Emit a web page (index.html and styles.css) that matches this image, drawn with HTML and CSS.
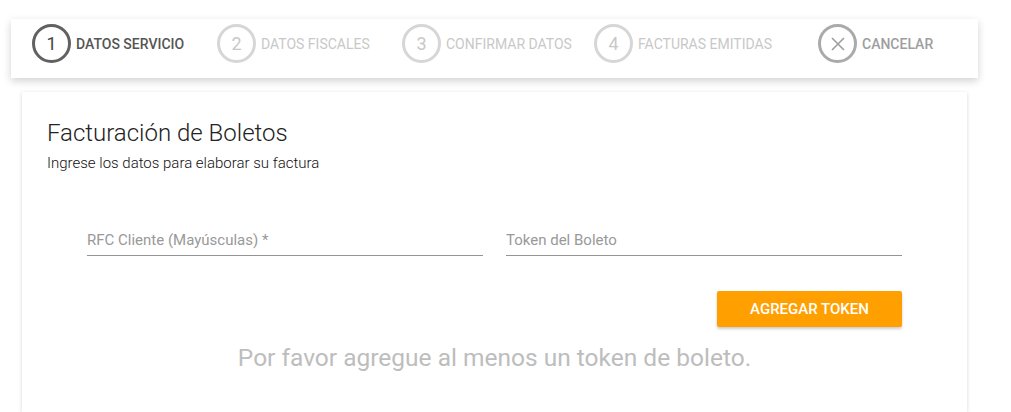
FILE: index.html
```html
<!DOCTYPE html>
<html lang="es">
<head>
  <meta charset="UTF-8">
  <meta name="viewport" content="width=device-width, initial-scale=1.0">
  <title>Facturación de Boletos</title>
  <link rel="stylesheet" href="styles.css">
</head>
<body>
  <div class="stepper">
    <div class="step active"><span class="circle">1</span><span class="step-label">DATOS SERVICIO</span></div>
    <div class="step"><span class="circle">2</span><span class="step-label">DATOS FISCALES</span></div>
    <div class="step"><span class="circle">3</span><span class="step-label">CONFIRMAR DATOS</span></div>
    <div class="step"><span class="circle">4</span><span class="step-label">FACTURAS EMITIDAS</span></div>
    <div class="step cancel">
      <span class="circle">
        <svg width="16" height="16" viewBox="0 0 16 16"><path d="M2 2 L14 14 M14 2 L2 14" stroke="#9e9e9e" stroke-width="1.6" fill="none"/></svg>
      </span>
      <span class="step-label">CANCELAR</span>
    </div>
  </div>

  <div class="card">
    <h1>Facturación de Boletos</h1>
    <p class="subtitle">Ingrese los datos para elaborar su factura</p>

    <div class="fields">
      <label class="field"><span>RFC Cliente (Mayúsculas) *</span></label>
      <label class="field"><span>Token del Boleto</span></label>
    </div>

    <div class="actions">
      <button>AGREGAR TOKEN</button>
    </div>

    <p class="empty">Por favor agregue al menos un token de boleto.</p>
  </div>
</body>
</html>
```

FILE: styles.css
```css
* {
  box-sizing: border-box;
}
body {
  margin: 0;
  padding: 19px 0 0 11px;
  font-family: Roboto, 'Liberation Sans', sans-serif;
  background: #fff;
  width: 1011px;
  height: 412px;
  overflow: hidden;
}

/* barra de pasos */
.stepper {
  width: 967px;
  height: 59px;
  background: #fff;
  box-shadow: 0 3px 8px rgba(0,0,0,0.18);
  display: grid;
  grid-template-columns: 185px 185px 192px 224px auto;
  align-items: start;
  padding: 5px 0 0 21px;
  position: relative;
  z-index: 1;
}
.step {
  display: flex;
  align-items: center;
  color: #c8c8c8;
  font-size: 14px;
}
.circle {
  width: 39px;
  height: 39px;
  border: 3px solid #d6d6d6;
  border-radius: 50%;
  display: flex;
  align-items: center;
  justify-content: center;
  font-size: 18px;
  color: #c8c8c8;
  margin-right: 5px;
}
.step.active {
  color: #555;
  font-weight: 500;
}
.step.active .circle {
  border-color: #616161;
  color: #444;
  font-weight: 400;
}
.step.cancel {
  color: #9e9e9e;
  font-weight: 500;
}
.step.cancel .circle {
  border-color: #aaa;
}

/* tarjeta */
.card {
  width: 945px;
  margin: 14px 0 0 11px;
  height: 320px;
  background: #fff;
  box-shadow: 0 1px 4px rgba(0,0,0,0.16);
  padding: 25px 25px 0;
}
h1 {
  margin: 0;
  font-size: 24px;
  font-weight: 300;
  color: #222;
  line-height: 32px;
}
.subtitle {
  margin: 4px 0 0;
  font-size: 15px;
  font-weight: 300;
  color: #111;
  line-height: 20px;
}
.fields {
  display: grid;
  grid-template-columns: 1fr 1fr;
  gap: 23px;
  padding: 0 40px;
  margin-top: 39px;
}
.field {
  display: block;
  border-bottom: 1px solid #949494;
  height: 44px;
  padding-top: 19px;
  font-size: 15px;
  color: #999;
}
.actions {
  display: flex;
  justify-content: flex-end;
  padding-right: 40px;
  margin-top: 35px;
}
button {
  width: 185px;
  height: 36px;
  background: #ffa000;
  color: #fff;
  border: none;
  border-radius: 2px;
  font-family: inherit;
  font-size: 15px;
  font-weight: 500;
  box-shadow: 0 2px 3px rgba(0,0,0,0.2);
}
.empty {
  text-align: center;
  margin: 16px 0 0;
  font-size: 24.5px;
  color: #bdbdbd;
  line-height: 30px;
}
```
